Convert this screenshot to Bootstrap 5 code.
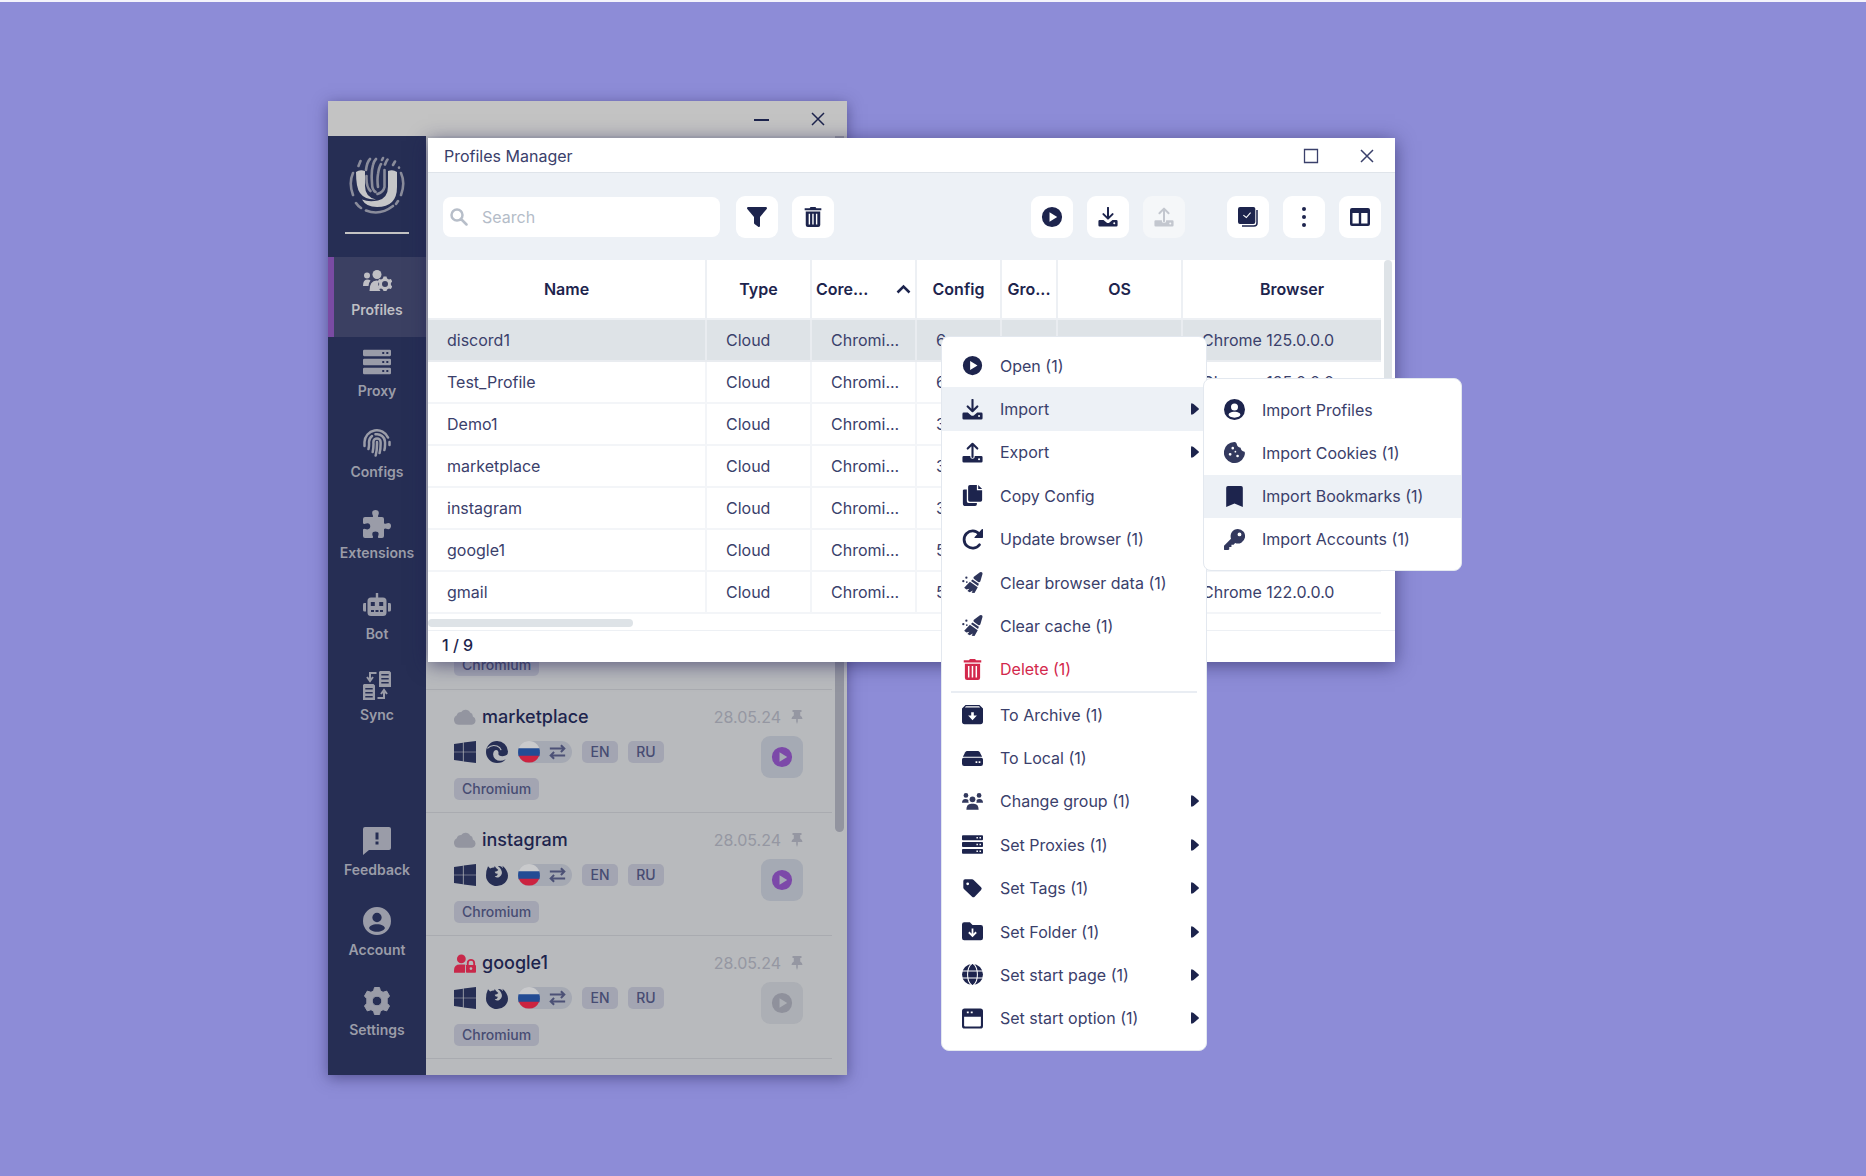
<!DOCTYPE html>
<html lang="en">
<head>
<meta charset="utf-8">
<meta name="viewport" content="width=device-width, initial-scale=1">
<title>Profiles Manager</title>
<link href="https://cdn.jsdelivr.net/npm/bootstrap@5.3.0/dist/css/bootstrap.min.css" rel="stylesheet">
<style>
:root{--navy:#1d244d;--ink:#3a406b;--mist:#edf1f6;--line:#edf0f4;--dim:#9a9ca8}
body{font-family:Inter,"Liberation Sans",sans-serif;background:#8d8cd7;color:var(--ink);font-size:16px;line-height:20px;min-height:100vh;border-top:2px solid #f4f3fb;overflow:hidden}
svg{display:block;flex:none;fill:currentColor}
button{font:inherit;color:inherit;border:0;background:none;padding:0}
.desk{position:relative}
.win{position:absolute;display:flex;flex-direction:column}
.win-back{left:328px;top:99px;width:519px;min-height:974px;background:#b8babd;box-shadow:0 3px 14px rgba(40,36,90,.55)}
.win-front{left:428px;top:136px;width:967px;background:#fff;box-shadow:0 3px 18px rgba(30,28,80,.6)}
.titlebar{height:35px;flex:none;color:var(--navy)}
.win-back .titlebar{background:#c3c3c3;padding:0 22px 0 0;gap:42px}
.win-front .titlebar{border-bottom:1px solid #dfe4ea;padding:1px 21px 0 16px;color:var(--ink)}
.ctl-gap{gap:41px}
.side{width:98px;background:#262e54;flex:none;color:var(--dim);padding-bottom:18px}
.logo-box{height:121px;padding-top:20px}
.side hr{width:64px;margin:18px auto 0;border-top:2px solid #c3c3c3;opacity:1}
.side-group{gap:1px}
.side-link{height:80px;color:var(--dim);text-decoration:none;font-size:14px;font-weight:600;line-height:20px;border-left:6px solid transparent;padding:9px 6px 0 0}
.side-link.active{background:#3b4062;border-left-color:#7a4ba3;color:#bfbfc4}
.icon-slot{height:29px;margin-bottom:5px}
.cards{width:406px;padding-bottom:16px}
.entry{height:123px;border-bottom:1px solid #a9abb0;padding:15px 29px 0 28px}
.entry-name{font-size:18px;font-weight:500;line-height:24px;color:var(--navy)}
.entry-tight{gap:6px}
.entry-date{font-size:16px;color:#9597a2}
.kind{color:#9395a0}
.kind.locked{color:#c8284a}
.chip{height:22px;min-width:36px;border-radius:5px;background:#a3a5b2;color:#474c72;font-size:14px;font-weight:500;line-height:22px;padding:0 8px;text-align:center}
.chip-swap{width:54px;height:22px;border-radius:11px;background:#a5a9b3;color:#4c5176;padding-right:6px}
.gap-chip{gap:10px}
.chip-row{margin-top:12px;color:#262e54}
.chip-line{margin-top:15px}
.play{width:42px;height:42px;border-radius:9px;background:#a5aab4;color:#7c49a9;margin-top:7px}
.play.off{color:#8f919c;background:#acafb5}
.back-scroll{width:9px;height:696px;border-radius:0 0 5px 5px;background:#92949f;margin-left:3px}
.toolbar{background:var(--mist);height:87px;padding:0 14px 0 15px;color:var(--navy)}
.tool{width:42px;height:42px;border-radius:9px;background:#fff}
.tool:disabled{background:#f5f7f9;color:#c3c7cf}
.tools{gap:14px}
.tools-wide{gap:42px}
.search{width:277px;height:40px;background:#fff;border-radius:8px;padding:0 7px;gap:12px;color:#b7bec9}
.search input{border:0;outline:0;width:100%;background:none;font-size:16px}
.search input::placeholder{color:#b4bcc8;opacity:1}
.grid-table{table-layout:fixed;width:953px;border-collapse:separate;border-spacing:0}
.grid-table th{height:60px;border-right:2px solid var(--line);border-bottom:2px solid var(--line);font-weight:600;color:var(--navy);text-align:center;font-size:16px;padding:0 4px}
.grid-table td{height:42px;border-right:2px solid #f3f5f8;border-bottom:2px solid #f3f5f8;padding:0 0 0 19px;white-space:nowrap}
.grid-table th:last-child,.grid-table td:last-child{border-right:0}
.grid-table .picked td{background:#dee3e7;border-color:#e9ecf0}
.vbar{width:8px;height:240px;border-radius:5px;background:#dee3e7;margin-left:3px}
.hbar{width:205px;height:8px;border-radius:5px;background:#dee3e7;margin:5px 0 3px}
.foot{height:32px;border-top:1px solid var(--line);padding-left:14px;color:var(--navy);font-weight:500}
.pop{position:absolute;background:#fff;border:1px solid #e3e8ef;border-radius:8px;display:flex;flex-direction:column}
.pop-main{left:941px;top:334px;width:266px;min-height:715px;padding:7px 0 10px}
.pop-sub{left:1203px;top:376px;width:259px;min-height:193px;padding:9px 0}
.pop-item{padding:0 7px 0 20px;gap:17px;color:var(--ink);text-align:left}
.pop-item svg{color:var(--navy)}
.pop-item.hot{background:var(--mist)}
.pop-item.danger,.pop-item.danger svg{color:#d3284c}
.pop-item .caret{margin-left:auto}
.pop hr{margin:0 9px;border-top:2px solid #e9edf3;opacity:1}
</style>
</head>
<body>
<svg width="0" height="0" class="position-absolute">
<defs>
<symbol id="play" viewBox="0 0 24 24"><path fill-rule="evenodd" d="M12 1a11 11 0 1 0 0 22 11 11 0 0 0 0-22zM9.300 6.800v10.400l8.400-5.200z"/></symbol>
<symbol id="down" viewBox="0 0 24 24"><path d="M12 1v12M6.500 8.500 12 14l5.500-5.500" fill="none" stroke="currentColor" stroke-width="2.400" stroke-linecap="round" stroke-linejoin="round"/><path fill-rule="evenodd" d="M2 15.500h4.600l3.600 3q1.800 1.400 3.600 0l3.600-3H22q1.500 0 1.500 1.500v5q0 1.500-1.500 1.500H2Q.5 23.500.5 22v-5q0-1.500 1.500-1.500zM19.500 18.300a1.200 1.200 0 1 0 0 2.400 1.200 1.200 0 0 0 0-2.400z"/></symbol>
<symbol id="up" viewBox="0 0 24 24"><path d="M12 17V2M6.500 7.500 12 2l5.500 5.500" fill="none" stroke="currentColor" stroke-width="2.400" stroke-linecap="round" stroke-linejoin="round"/><path fill-rule="evenodd" d="M2 16h7.500v1q0 2 2.500 2t2.500-2v-1H22q1.500 0 1.500 1.500V22q0 1.500-1.500 1.500H2Q.5 23.500.5 22v-4.500Q.5 16 2 16zM19.500 18.500a1.200 1.200 0 1 0 0 2.400 1.200 1.200 0 0 0 0-2.400z"/></symbol>
<symbol id="copy" viewBox="0 0 24 24"><path d="M9 0h8v6h6v11q0 2-2 2H9q-2 0-2-2V2q0-2 2-2zM18.500 0 23 4.500h-4.500z"/><path d="M2 5h3.500v13.500q0 2 2 2H17V22q0 2-2 2H4q-3 0-3-3V6z"/></symbol>
<symbol id="redo" viewBox="0 0 24 24"><path d="M20 18A9.800 9.800 0 1 1 19.500 5.500" fill="none" stroke="currentColor" stroke-width="3.200" stroke-linecap="round"/><path d="M24 .5v9q0 .8-.8.8h-8.500q-1-.5-.2-1.300L22.600.2q1-.6 1.400.3z"/></symbol>
<symbol id="broom" viewBox="0 0 24 24"><g opacity=".92"><path d="M20.500.3q3-.8 3 1.700L21 10.500q-.8 1.800-2.500.8l-4.600-3.200q-1.400-1.200-.3-2.600zM12 8.500l7.300 5-1 2.400-8-5.600zM9 11.200l9 6.200-3.700 6.600-3.200-.3 1.200-2.700-3.500 2-2.600-1.400 2.300-2.500-3.500 1-2.500-2.200z"/><circle cx="5" cy="6.500" r="1.300"/><circle cx="1.500" cy="10.500" r="1.300"/><circle cx="5.500" cy="11.500" r="1"/></g></symbol>
<symbol id="trash" viewBox="0 0 24 24"><path fill-rule="evenodd" d="M9 0h6l1 1.500h6V4H2V1.500h6zM3.300 5.500h17.400v16q0 2.500-2.500 2.500H5.800q-2.500 0-2.500-2.500zM6.800 8v13h1.700V8zm4.300 0v13h1.700V8zm4.400 0v13h1.700V8z"/></symbol>
<symbol id="archive" viewBox="0 0 24 24"><path fill-rule="evenodd" d="M4 1h16l4 4v15q0 3-3 3H3q-3 0-3-3V5zM4.500 2.700 3.300 4h17.400l-1.200-1.300zM10.500 9.500V13H7l5 5.500 5-5.500h-3.500V9.500z"/></symbol>
<symbol id="drive" viewBox="0 0 24 24"><path d="M6 3.500h12q1.500 0 2.300 1.300L23 10H1l2.700-5.200Q4.500 3.500 6 3.500z"/><path fill-rule="evenodd" d="M2 11.200h20q2 0 2 2V18q0 2.500-2.500 2.500h-19Q0 20.500 0 18v-4.800q0-2 2-2zM15.500 15v2h2v-2zm3.500 0v2h2v-2z"/></symbol>
<symbol id="group" viewBox="0 0 24 24"><g opacity=".9"><circle cx="4.500" cy="5" r="2.700"/><circle cx="19.500" cy="5" r="2.700"/><circle cx="12" cy="9.500" r="3.300"/><path d="M0 13.500q0-4.500 4-4.500 2 0 3.300 1.200-.4 1.800.4 3.300zM24 13.500q0-4.500-4-4.500-2 0-3.300 1.200.4 1.800-.4 3.300zM5 21.500q0-7 5.500-7h3q5.500 0 5.500 7z"/></g></symbol>
<symbol id="server" viewBox="0 0 24 24"><path fill-rule="evenodd" d="M1 1.500h22q1 0 1 1v3.500q0 1-1 1H1Q0 7 0 6V2.500q0-1 1-1zm15.500 1.900v1.700h1.700V3.400zm3.500 0v1.700h1.700V3.400zM1 9.200h22q1 0 1 1v3.600q0 1-1 1H1q-1 0-1-1v-3.600q0-1 1-1zm15.500 2v1.700h1.700v-1.700zm3.500 0v1.700h1.700v-1.700zM1 17h22q1 0 1 1v3.500q0 1-1 1H1q-1 0-1-1V18q0-1 1-1zm15.500 1.900v1.700h1.700v-1.700zm3.500 0v1.700h1.700v-1.700z"/></symbol>
<symbol id="tag" viewBox="0 0 24 24"><path fill-rule="evenodd" d="M3.500 1.500h8q1 0 1.800.7l8.500 8.500q1.500 1.500 0 3l-7.300 7.600q-1.500 1.400-3 0L2.200 12.500q-.7-.7-.7-1.700V3.500q0-2 2-2zM6.500 5a1.600 1.600 0 1 0 0 3.200 1.600 1.600 0 0 0 0-3.200z"/></symbol>
<symbol id="folder" viewBox="0 0 24 24"><path fill-rule="evenodd" d="M2.500 1.500H9l3 3h9.500Q24 4.500 24 7v12.500q0 2.500-2.500 2.500h-19Q0 22 0 19.500V4q0-2.500 2.500-2.500zM11 8.500v6l-2.400-2.400-1.500 1.500L12 18.500l4.900-4.900-1.500-1.500L13 14.500v-6z"/></symbol>
<symbol id="globe" viewBox="0 0 24 24"><circle cx="12" cy="12" r="12"/><path d="M0 8h24M0 16h24M12-1C4.500 4 4.500 20 12 25M12-1c7.500 5 7.500 21 0 26" fill="none" stroke="#fff" stroke-width="1.200"/></symbol>
<symbol id="window" viewBox="0 0 24 24"><path fill-rule="evenodd" d="M3 .5h18q3 0 3 3v17q0 3-3 3H3q-3 0-3-3v-17q0-3 3-3zM2.400 10v10q0 1.200 1.200 1.200h16.800q1.200 0 1.200-1.200V10zM5.500 4v2H7.700V4zm4.500 0v2h2.200V4z"/></symbol>
<symbol id="user" viewBox="0 0 24 24"><path fill-rule="evenodd" d="M12 0a12 12 0 1 0 0 24 12 12 0 0 0 0-24zm0 5a4 4 0 1 1 0 8 4 4 0 0 1 0-8zm0 9.700c4 0 6.700 1.600 6.700 3.300 0 1.400-3 3.300-6.700 3.300S5.300 19.400 5.300 18c0-1.700 2.700-3.300 6.700-3.300z"/></symbol>
<symbol id="cookie" viewBox="0 0 24 24"><path opacity=".9" fill-rule="evenodd" d="M12 0q2 0 2.500 2 .5 4 4.500 4.500.5 4 4.500 4.500 1 2-.5 5.500A12 12 0 1 1 12 0zM10 5.500a1.500 1.500 0 1 0 0 3 1.500 1.500 0 0 0 0-3zm-3 7a1.600 1.600 0 1 0 0 3.200 1.600 1.600 0 0 0 0-3.200zm8.500 2a1.500 1.500 0 1 0 0 3 1.500 1.500 0 0 0 0-3zM13 10a1 1 0 1 0 0 2 1 1 0 0 0 0-2z"/></symbol>
<symbol id="bookmark" viewBox="0 0 24 24"><path d="M4.500 0h15q2 0 2 2v22L12 20l-9.500 4V2q0-2 2-2z"/></symbol>
<symbol id="key" viewBox="0 0 24 24"><path opacity=".9" fill-rule="evenodd" d="M15.700 0a8.300 8.300 0 1 1-3 16L11 18H8.500v2.500H6V23l-1 1H1q-1 0-1-1v-4l8-8A8.300 8.300 0 0 1 15.700 0zm2 4a2.200 2.200 0 1 0 0 4.400 2.200 2.200 0 0 0 0-4.400z"/></symbol>
<symbol id="caret" viewBox="0 0 8 12"><path d="M0 1.500Q0 0 1.300.4L2.500 1l5 4.200q.8.800 0 1.600l-5 4.200-1.200.6Q0 12 0 10.500z"/></symbol>
<symbol id="cross" viewBox="0 0 14 14"><path d="M1 1l12 12M13 1 1 13" fill="none" stroke="currentColor" stroke-width="1.500"/></symbol>
<symbol id="pin" viewBox="0 0 12 14"><path d="M1.500 0h9v2H9.200v3.500Q11.500 6.500 11.500 9h-4.700v2.500L6 14l-.8-2.500V9H.5Q.5 6.500 2.800 5.500V2H1.500z"/></symbol>
<symbol id="cloud" viewBox="0 0 24 17"><path d="M5.500 17A5.500 5.500 0 0 1 3 6.600 5 5 0 0 1 8 3 5.500 5.500 0 0 1 17.500 3.500 4.300 4.300 0 0 1 20.500 8 4.700 4.700 0 0 1 19.500 17z"/></symbol>
<symbol id="userlock" viewBox="0 0 24 20"><circle cx="8" cy="5" r="4.800"/><path d="M0 20v-2.500Q0 11 6.500 11H11q.8 0 1.500.3-.5.600-.5 1.700v7z"/><path fill-rule="evenodd" d="M13 11.500h1V9.500a4.500 4.500 0 0 1 9 0v2q1 .2 1 1.200V19q0 1-1 1h-9q-1 0-1-1zM16 11.500h5v-2a2.500 2.500 0 0 0-5 0zm2.500 2.500a1.500 1.500 0 1 0 0 3 1.500 1.500 0 0 0 0-3z"/></symbol>
<symbol id="win" viewBox="0 0 24 24"><path d="M0 3.200 9.700 1.800v9.800H0zM10.500 1.700 24 0v11.600H10.500zM0 12.400h9.700v9.800L0 20.800zM10.500 12.400H24V24l-13.500-1.700z"/></symbol>
<symbol id="edge" viewBox="0 0 24 24"><path d="M12 0a12 12 0 0 1 12 11.500q0 5-6 5-4.500 0-4.500-2.500.5-1.500-.5-3.500-2.500-1.500-4.500 1Q6.500 16 10 19.500q5 4 11.500.3Q18 24 12 24A12 12 0 0 1 12 0z"/><path d="M1.500 8Q6 3.500 12 5.500q3.500 1.500 4.500 4.500" fill="none" stroke="#b8babd" stroke-width="1.300"/></symbol>
<symbol id="fox" viewBox="0 0 24 24"><path d="M2.200 2.500 4.500 5Q7 3.500 9 3.800l.5-1.500q1.300 2.700 4 4.200-1.500 1.800-4 2 .5 2.500 3.500 2-.5 2.800-3.500 2.800 2 2.500 5 1 4.500-3 2-8Q15.500 4 13 2.500 16 1.500 18.500 4.500L18 2q5.500 4.500 6 10.500A12 11.500 0 0 1 0 12.500Q0 7 2.200 2.500z"/></symbol>
<symbol id="swap" viewBox="0 0 20 18"><path d="M1 5h17M14 1l4 4-4 4M19 13H2M6 9l-4 4 4 4" fill="none" stroke="currentColor" stroke-width="2.400"/></symbol>
<symbol id="flag" viewBox="0 0 24 24"><path fill="#c9cacc" d="M0 12a12 12 0 0 1 24 0z"/><path fill="#234c94" d="M.6 8h22.800q1 4 0 8.500H.6q-1-4.500 0-8.500z"/><path fill="#cc2340" d="M.9 16h22.200A12 12 0 0 1 .9 16z"/></symbol>
</defs>
</svg>

<main class="desk">
<section class="win win-back" aria-label="Profiles">
  <header class="titlebar d-flex align-items-center justify-content-end">
    <button aria-label="Minimize"><svg width="15" height="14"><path d="M0 8h15" stroke="currentColor" stroke-width="2"/></svg></button>
    <button aria-label="Close"><svg width="14" height="14"><use href="#cross"/></svg></button>
  </header>
  <div class="d-flex flex-fill">
    <nav class="side d-flex flex-column">
      <div class="logo-box">
        <svg class="mx-auto" width="56" height="58" viewBox="0 0 56 58">
          <g fill="none" stroke="#8a8c9b" stroke-width="2.600" stroke-linecap="round">
            <path d="M4 17Q-.500 27 4 39M52 17q4.500 10 0 22M7 47q2 3 5 5M17 54.500Q31 60 44 50M47 48l2-3M9.500 10l2-5M17 14q1-8 4-11M23 27q-1-11 1-18 1-4 3-6M23 27q0 7 3.500 9M17.500 20q-.500 11 4 15M29 31q-1-7 0-13 1-7 3-10M33 4l1-2M36 8.500q1-3 2.500-5M35.500 14v17q-1 5-7 7M44 9l2-3.500M50 11.500v.2"/>
          </g>
          <path fill="#c6c6c8" d="M7 16q4-3 9-1v15q0 11 11 13.500-11 .5-16-6.500-4-5-4-21zM39 15q5-2 9 1v15q0 20-20 20-11 0-15-7.500 7 3 16 1 10-2.500 10-14z"/>
        </svg>
        <hr>
      </div>
      <div class="side-group d-flex flex-column flex-fill">
        <a href="#" class="side-link active text-center"><span class="icon-slot d-flex align-items-center justify-content-center"><svg width="29" height="21" viewBox="0 0 29 21"><circle cx="4" cy="5.500" r="3"/><circle cx="14" cy="4.500" r="4.500"/><path d="M0 16q0-6.500 4-6.500 2.500 0 3.500 1Q5.500 13 5.500 16zM6.500 21q0-10.500 7-10.500 1.500 0 2.500.5-2 5 1.500 10z"/><path fill-rule="evenodd" d="M20.500 6.500h3l.6 2 1.800 1 2-.5 1.400 2.500-1.400 1.500v2l1.400 1.500-1.400 2.500-2-.5-1.800 1-.6 1.500h-3l-.6-1.500-1.800-1-2 .5-1.400-2.500 1.400-1.500v-2l-1.400-1.500 1.400-2.500 2 .5 1.800-1zM22 11a3 3 0 1 0 0 6 3 3 0 0 0 0-6z"/></svg></span>Profiles</a>
        <a href="#" class="side-link text-center"><span class="icon-slot d-flex align-items-center justify-content-center"><svg width="28" height="28"><use href="#server"/></svg></span>Proxy</a>
        <a href="#" class="side-link text-center"><span class="icon-slot d-flex align-items-center justify-content-center"><svg width="28" height="28" viewBox="0 0 28 28"><g fill="none" stroke="currentColor" stroke-width="2.500" stroke-linecap="round"><path d="M1.500 17v-4A12.300 12.300 0 0 1 25 8.500M26.500 13v3M5.500 20q.8-3 .5-7a8 8 0 0 1 3-6M12.500 5.300A8 8 0 0 1 22 13q.2 5-.6 8M9.700 23q1-5 .7-10a3.600 3.600 0 0 1 7.200 0q.2 6-1 11M14 13q.2 8-1.300 13.500"/></g></svg></span>Configs</a>
        <a href="#" class="side-link text-center"><span class="icon-slot d-flex align-items-center justify-content-center"><svg width="28" height="28" viewBox="0 0 28 28"><path d="M0 9q0-2 2-2h7.500q1-.5.200-1.800Q8.500 2 10 .8q2.500-1.600 5 0 1.500 1.700.3 4.400-.8 1.300.3 1.800H19q2 0 2 2v4q.8 1.500 2.300.4 2.700-1 4 .4 1.500 2.200 0 4.500-1.500 1.500-4 .4-1.500-.8-2.300.5V26q0 2-2 2h-3.500q-1-.8-.3-2 1-3.200-.5-4-2.200-1.200-4.500 0-1.500 1-.5 4 .8 1.300-.2 2H2q-2 0-2-2v-6.500q.8-1.300 2.200-.5 3 1 4.300-.4 1.500-2.200 0-4.600-1.300-1.300-4.300-.3Q.8 14.500 0 13.300z"/></svg></span>Extensions</a>
        <a href="#" class="side-link text-center"><span class="icon-slot d-flex align-items-center justify-content-center"><svg width="28" height="23" viewBox="0 0 28 23"><path fill-rule="evenodd" d="M12.800 0h2.400v4.500H20q3.500 0 3.500 3.500v11.500q0 3.500-3.500 3.500H8q-3.500 0-3.500-3.500V8q0-3.500 3.500-3.500h4.800zM7.800 9v4h4V9zm8.400 0v4h4V9zM8 17v2h3v-2zm4.500 0v2h3v-2zm4.500 0v2h3v-2z"/><path d="M0 12q0-2 1-2h2v8.500H1q-1 0-1-2zM28 12q0-2-1-2h-2v8.500h2q1 0 1-2z"/></svg></span>Bot</a>
        <a href="#" class="side-link text-center"><span class="icon-slot d-flex align-items-center justify-content-center"><svg width="28" height="29" viewBox="0 0 28 29"><path fill-rule="evenodd" d="M17 0h9.500L28 1.500V16H16V1zm1.300 3v1.500h7.400V3zm0 4v1.500h7.400V7zm0 4v1.500h7.400V11zM1 13h9.500l1.500 1.500V29H0V14zm1.300 4v1.500h7.400V17zm0 4v1.500h7.400V21zm0 4v1.500h7.400V25z"/><path d="M13.500 2H7v6M4 6l3 4 3-4M14.500 27H21v-6M18 23l3-4 3 4" fill="none" stroke="currentColor" stroke-width="2"/></svg></span>Sync</a>
      </div>
      <div>
        <a href="#" class="side-link d-block text-center"><span class="icon-slot d-flex align-items-center justify-content-center"><svg width="28" height="28" viewBox="0 0 28 28"><path fill-rule="evenodd" d="M2 0h24q2 0 2 2v19q0 2-2 2H6l-6 5V2q0-2 2-2zm10.500 5.500v7h3v-7zm0 9v3h3v-3z"/></svg></span>Feedback</a>
        <a href="#" class="side-link d-block text-center"><span class="icon-slot d-flex align-items-center justify-content-center"><svg width="28" height="28"><use href="#user"/></svg></span>Account</a>
        <a href="#" class="side-link d-block text-center"><span class="icon-slot d-flex align-items-center justify-content-center"><svg width="28" height="28" viewBox="0 0 28 28"><path fill-rule="evenodd" stroke="currentColor" stroke-linejoin="round" d="M11.500.5h5l.9 3.300 2.600 1.500 3.700-1.200L26.500 9l-2.300 2.700v4.600l2.300 2.700-2.800 4.900-3.700-1.200-2.600 1.500-.9 3.300h-5l-.9-3.300L8 22.700l-3.700 1.200L1.500 19l2.300-2.700v-4.600L1.500 9l2.800-4.900L8 5.300l2.600-1.500zM14 9.200a4.800 4.800 0 1 0 0 9.600 4.800 4.800 0 0 0 0-9.600z"/></svg></span>Settings</a>
      </div>
    </nav>
    <div class="cards d-flex flex-column justify-content-end" id="cards"></div>
    <div class="back-scroll"></div>
  </div>
</section>

<section class="win win-front" aria-label="Profiles Manager">
  <header class="titlebar d-flex align-items-center">
    <span class="me-auto">Profiles Manager</span>
    <span class="d-flex align-items-center ctl-gap">
      <button aria-label="Maximize"><svg width="16" height="16"><path d="M1.500 1.500h13v13h-13z" fill="none" stroke="currentColor" stroke-width="1.300"/></svg></button>
      <button aria-label="Close"><svg width="14" height="14"><use href="#cross"/></svg></button>
    </span>
  </header>
  <div class="toolbar d-flex align-items-center">
    <label class="search d-flex align-items-center"><svg width="18" height="18" viewBox="0 0 18 18"><path d="M7 1.500a5.500 5.500 0 1 0 0 11 5.500 5.500 0 0 0 0-11zM11 11l5.500 5.500" fill="none" stroke="currentColor" stroke-width="2.500" stroke-linecap="round"/></svg><input type="text" placeholder="Search" aria-label="Search"></label>
    <div class="d-flex tools ms-3 me-auto">
      <button class="tool d-flex align-items-center justify-content-center" aria-label="Filter"><svg width="20" height="20" viewBox="0 0 20 20"><path d="M.8 0h18.400q1.200.8.500 2L13 10v9q-.5 1.500-1.800.8L7.500 17q-.5-.5-.5-1v-6L.3 2Q-.4.800.8 0z"/></svg></button>
      <button class="tool d-flex align-items-center justify-content-center" aria-label="Delete"><svg width="20" height="20"><use href="#trash"/></svg></button>
    </div>
    <div class="d-flex tools-wide">
      <div class="d-flex tools">
        <button class="tool d-flex align-items-center justify-content-center" aria-label="Open"><svg width="22" height="22"><use href="#play"/></svg></button>
        <button class="tool d-flex align-items-center justify-content-center" aria-label="Import"><svg width="20" height="20"><use href="#down"/></svg></button>
        <button class="tool d-flex align-items-center justify-content-center" aria-label="Export" disabled><svg width="20" height="20"><use href="#up"/></svg></button>
      </div>
      <div class="d-flex tools">
        <button class="tool d-flex align-items-center justify-content-center" aria-label="Select all"><svg width="20" height="20" viewBox="0 0 20 20"><path fill-rule="evenodd" d="M2 0h13.500q1.800 0 1.800 1.800V15q0 2-2 2H2q-2 0-2-2V2q0-2 2-2zm11 6-.8-.7-3.900 4.500L5.700 7.700l-.7.8 3.400 2.800z"/><path d="M19 3v13q0 3-3 3H4" fill="none" stroke="currentColor" stroke-width="1.500"/></svg></button>
        <button class="tool d-flex align-items-center justify-content-center" aria-label="More"><svg width="6" height="20" viewBox="0 0 6 20"><circle cx="3" cy="2" r="2"/><circle cx="3" cy="10" r="2"/><circle cx="3" cy="18" r="2"/></svg></button>
        <button class="tool d-flex align-items-center justify-content-center" aria-label="Columns"><svg width="20" height="18" viewBox="0 0 20 18"><path fill-rule="evenodd" d="M2 0h16q2 0 2 2v14q0 2-2 2H2q-2 0-2-2V2q0-2 2-2zm.5 5v10.500h6.300V5zm8.700 0v10.500h6.300V5z"/></svg></button>
      </div>
    </div>
  </div>
  <div class="d-flex">
    <table class="grid-table">
      <colgroup><col style="width:279px"><col style="width:105px"><col style="width:105px"><col style="width:85px"><col style="width:56px"><col style="width:125px"><col></colgroup>
      <thead><tr><th>Name</th><th>Type</th><th><span class="d-flex align-items-center justify-content-between">Core...<svg width="15" height="10" viewBox="0 0 15 10"><path d="M1.500 8.500l6-6 6 6" fill="none" stroke="currentColor" stroke-width="2.500"/></svg></span></th><th>Config</th><th>Gro...</th><th>OS</th><th class="ps-4">Browser</th></tr></thead>
      <tbody id="rows"></tbody>
    </table>
    <div class="vbar"></div>
  </div>
  <div class="hbar"></div>
  <footer class="foot d-flex align-items-center pb-1">1 / 9</footer>
</section>

<div class="pop pop-main" id="menu"></div>
<div class="pop pop-sub" id="submenu"></div>
</main>

<script src="https://cdn.jsdelivr.net/npm/bootstrap@5.3.0/dist/js/bootstrap.bundle.min.js"></script>
<script>
const icon=(n,w,h)=>`<svg width="${w}" height="${h||w}"><use href="#${n}"/></svg>`;
document.getElementById('rows').innerHTML=[['discord1',6,'Chrome 125.0.0.0'],['Test_Profile',6,'Chrome 125.0.0.0'],['Demo1',3,''],['marketplace',3,''],['instagram',3,''],['google1',5,''],['gmail',5,'Chrome 122.0.0.0']]
 .map((r,i)=>`<tr class="${i?'':'picked'}"><td>${r[0]}</td><td>Cloud</td><td>Chromi...</td><td>${r[1]}</td><td></td><td></td><td>${r[2]}</td></tr>`).join('');
const item=([n,t,more,cls])=>n?`<button class="pop-item d-flex flex-fill align-items-center ${cls||''}">${icon(n,21)}<span>${t}</span>${more?`<svg class="caret" width="8" height="12"><use href="#caret"/></svg>`:''}</button>`:'<hr>';
document.getElementById('menu').innerHTML=[['play','Open (1)'],['down','Import',1,'hot'],['up','Export',1],['copy','Copy Config'],['redo','Update browser (1)'],['broom','Clear browser data (1)'],['broom','Clear cache (1)'],['trash','Delete (1)',0,'danger'],[],['archive','To Archive (1)'],['drive','To Local (1)'],['group','Change group (1)',1],['server','Set Proxies (1)',1],['tag','Set Tags (1)',1],['folder','Set Folder (1)',1],['globe','Set start page (1)',1],['window','Set start option (1)',1]].map(item).join('');
document.getElementById('submenu').innerHTML=[['user','Import Profiles'],['cookie','Import Cookies (1)'],['bookmark','Import Bookmarks (1)',0,'hot'],['key','Import Accounts (1)']].map(item).join('');
const core='<div class="d-flex chip-line"><span class="chip">Chromium</span></div>';
const entry=([n,b,ic])=>`<article class="entry"><div class="d-flex align-items-center entry-tight"><span class="kind ${ic=='userlock'?'locked':''}">${icon(ic,22,ic=='cloud'?16:19)}</span><span class="entry-name me-auto">${n}</span><span class="entry-date me-1">28.05.24</span><span class="entry-date">${icon('pin',12,14)}</span></div>
<div class="d-flex justify-content-between"><div><div class="chip-row d-flex gap-chip align-items-center">${icon('win',22)}${icon(b,22)}<span class="chip-swap d-flex align-items-center justify-content-between">${icon('flag',22)}${icon('swap',17,16)}</span><span class="chip">EN</span><span class="chip">RU</span></div>${core}</div>
<button class="play d-flex align-items-center justify-content-center ${ic=='userlock'?'off':''}" aria-label="Start">${icon('play',22)}</button></div></article>`;
document.getElementById('cards').innerHTML=`<article class="entry d-flex flex-column justify-content-end" style="padding-bottom:13px">${core}</article>`+[['marketplace','edge','cloud'],['instagram','fox','cloud'],['google1','fox','userlock']].map(entry).join('');
</script>
</body>
</html>
